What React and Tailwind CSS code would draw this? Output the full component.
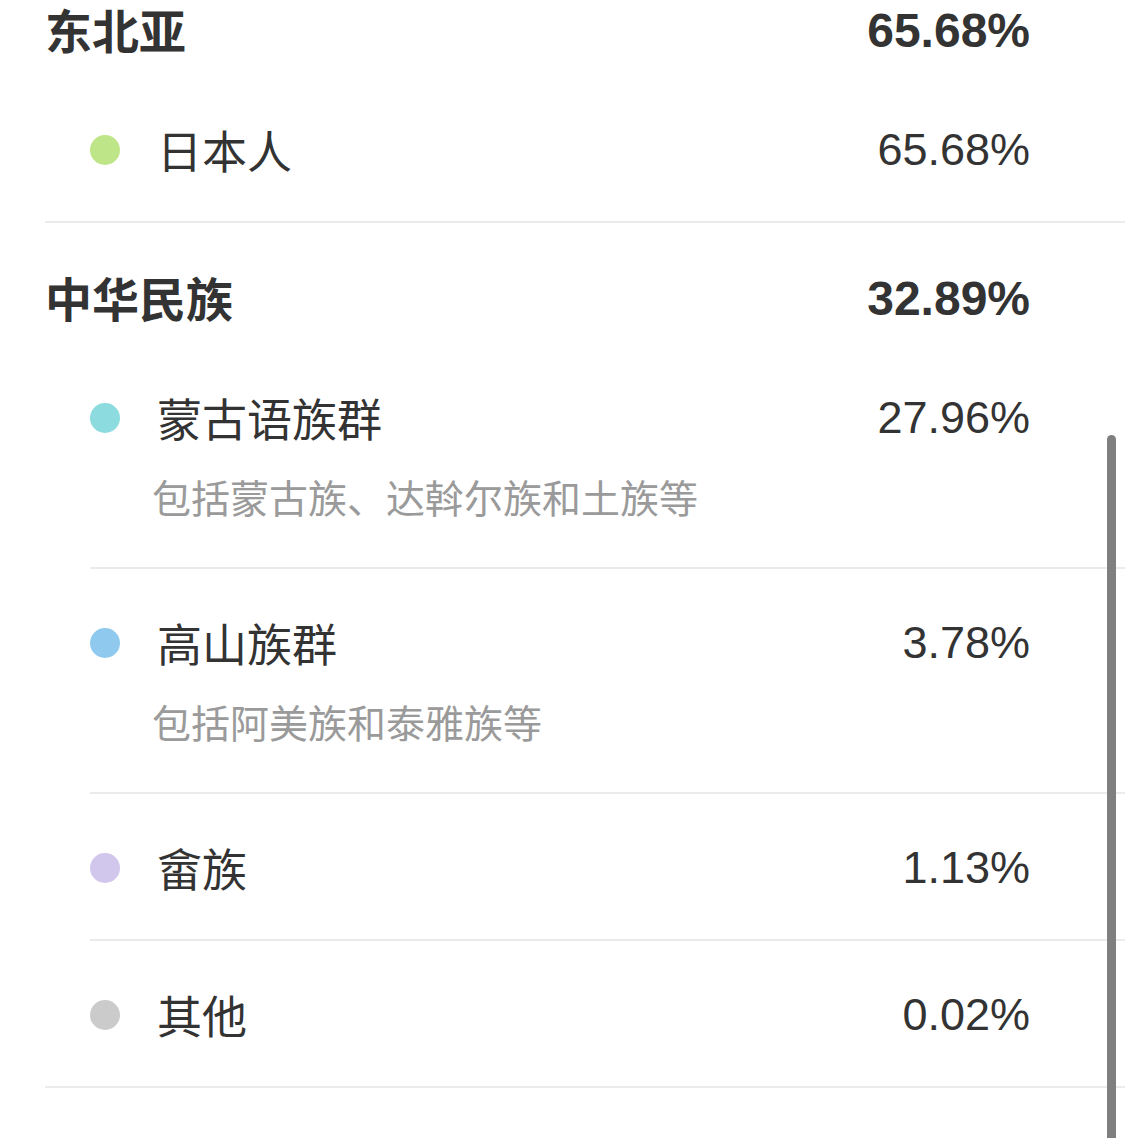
import React from "react";

const groups = [
  {
    name: "东北亚",
    pct: "65.68%",
    items: [{ name: "日本人", pct: "65.68%", color: "bg-[#bfe589]" }],
  },
  {
    name: "中华民族",
    pct: "32.89%",
    items: [
      { name: "蒙古语族群", pct: "27.96%", color: "bg-[#8cdbde]", sub: "包括蒙古族、达斡尔族和土族等" },
      { name: "高山族群", pct: "3.78%", color: "bg-[#8fcaee]", sub: "包括阿美族和泰雅族等" },
      { name: "畲族", pct: "1.13%", color: "bg-[#d1c6ec]" },
      { name: "其他", pct: "0.02%", color: "bg-[#cbcbcb]" },
    ],
  },
];

const cjk = "font-['Noto_Sans_CJK_SC',sans-serif]";
const num = "font-['Liberation_Sans',Arial,sans-serif]";

function Item({ item, first }) {
  return (
    <div className={`ml-[45px] pr-[95px] pt-[48px] pb-[45px] ${first ? "" : "border-t-2 border-[#ebebeb]"}`}>
      <div className="flex items-center h-[52px]">
        <span className={`w-[30px] h-[30px] rounded-full shrink-0 ${item.color}`} />
        <span className={`ml-[37px] text-[45px] leading-[52px] text-[#333333] ${cjk}`}>{item.name}</span>
        <span className={`ml-auto text-[45px] leading-[52px] text-[#333333] ${num}`}>{item.pct}</span>
      </div>
      {item.sub && (
        <div className={`mt-[28px] mb-[2px] ml-[62px] text-[39px] leading-[48px] text-[#9a9a9a] ${cjk}`}>
          {item.sub}
        </div>
      )}
    </div>
  );
}

export default function App() {
  return (
    <div className="relative w-[1125px] h-[1138px] overflow-hidden bg-white">
      <div className="-mt-[45px] pl-[45px]">
        {groups.map((g) => (
          <div key={g.name} className="border-b-2 border-[#ebebeb]">
            <div className="flex items-center h-[56px] mt-[46px] mb-[19px] pr-[95px]">
              <span className={`text-[47px] leading-[56px] font-semibold text-[#333333] ${cjk}`}>{g.name}</span>
              <span className={`ml-auto text-[48px] leading-[56px] font-bold text-[#333333] pt-[4px] ${num}`}>{g.pct}</span>
            </div>
            {g.items.map((it, i) => (
              <Item key={it.name} item={it} first={i === 0} />
            ))}
          </div>
        ))}
      </div>
      <div className="absolute left-[1107px] top-[435px] w-[9px] h-[720px] rounded-full bg-[#7f7f7f]" />
    </div>
  );
}
